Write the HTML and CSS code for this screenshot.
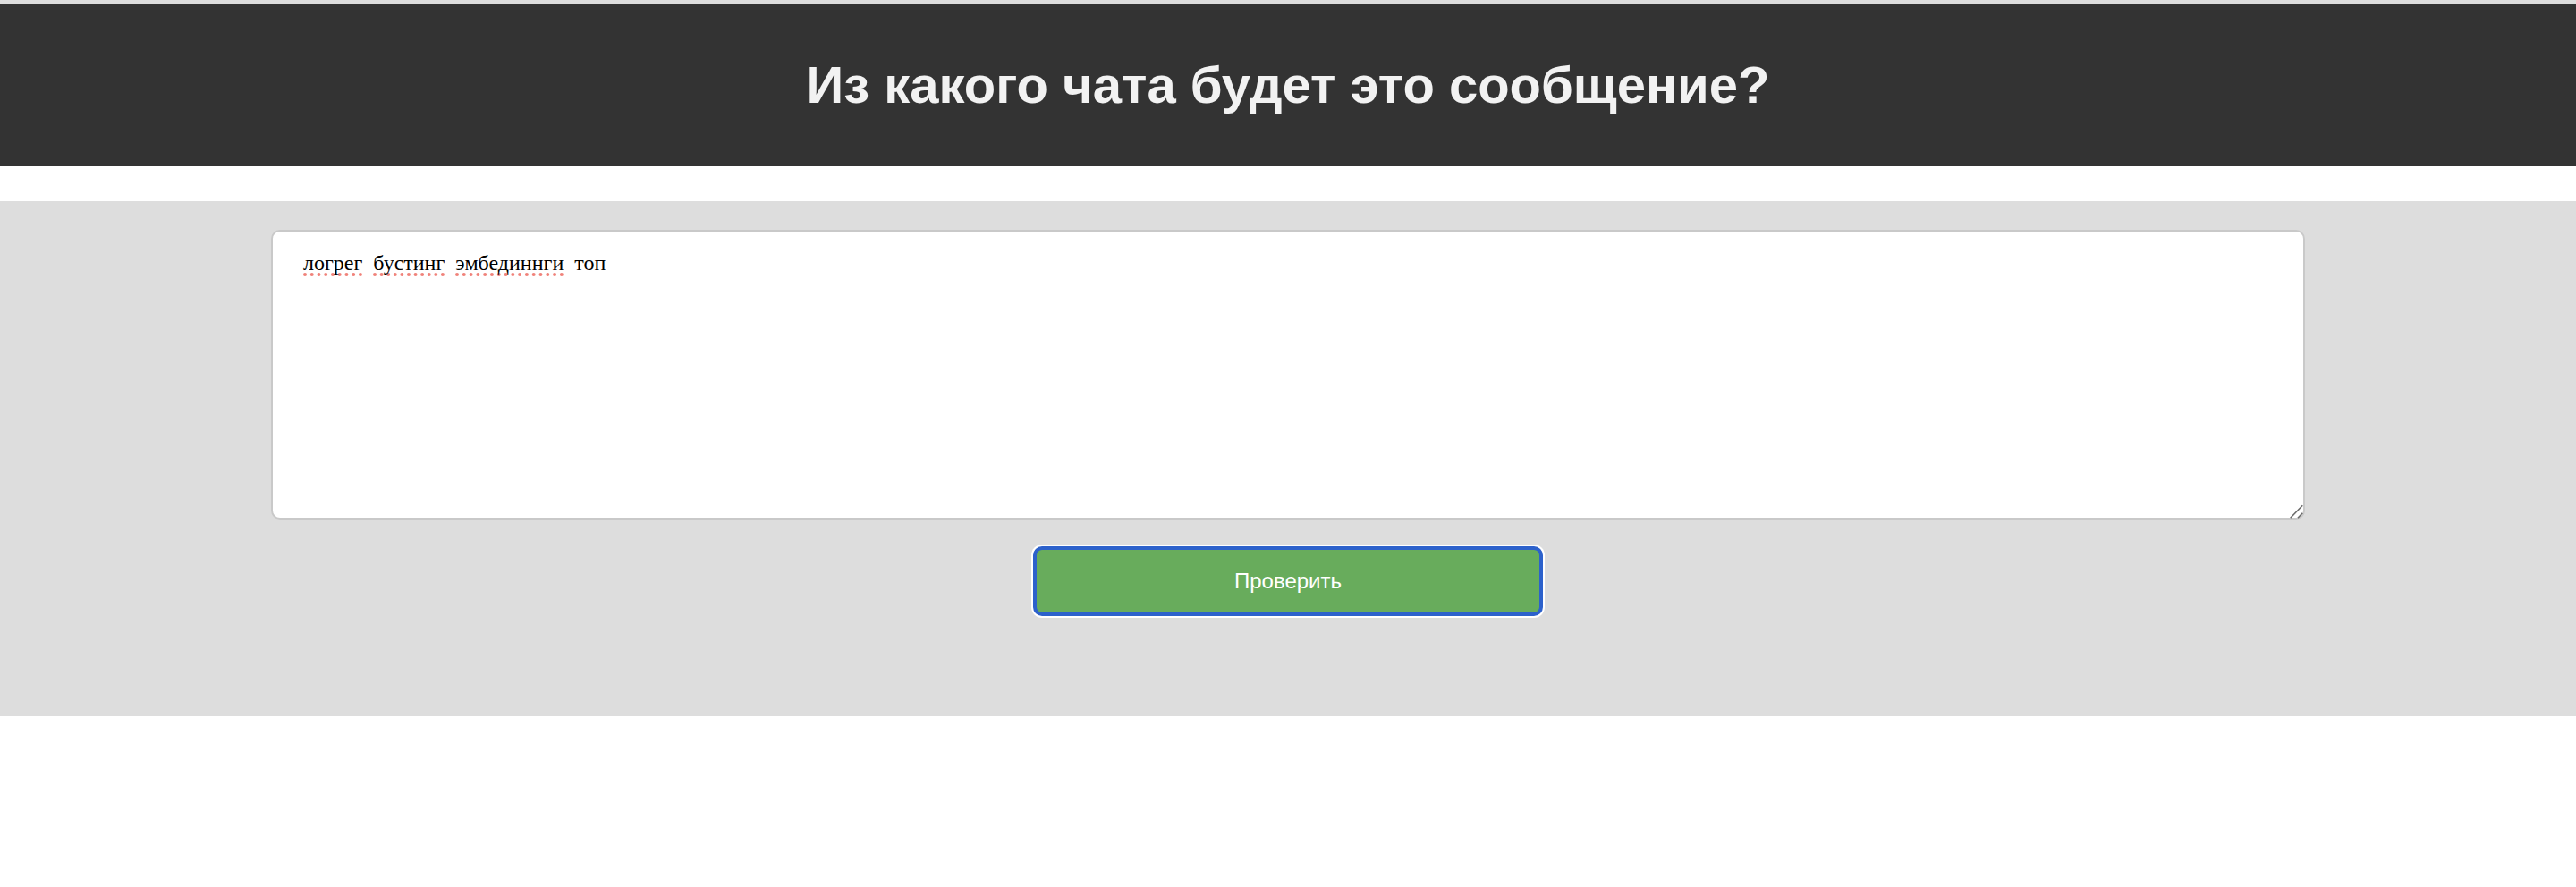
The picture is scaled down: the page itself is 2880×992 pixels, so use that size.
FILE: index.html
```html
<!DOCTYPE html>
<html lang="ru">
<head>
<meta charset="utf-8">
<title>Из какого чата будет это сообщение?</title>
<link rel="stylesheet" href="styles.css">
</head>
<body>
<header class="site-header">
  <h1 class="title">Из какого чата будет это сообщение?</h1>
</header>
<main class="panel">
  <form class="check-form">
    <div class="input-wrap">
      <div class="message-input" contenteditable="true" role="textbox" aria-multiline="true"><span class="typo">логрег</span>  <span class="typo">бустинг</span>  <span class="typo">эмбединнги</span>  топ</div>
      <svg class="resizer" width="16" height="16" viewBox="0 0 16 16" aria-hidden="true">
        <line x1="0.7" y1="15.3" x2="14.3" y2="1.3" stroke="#6a6a6a" stroke-width="1.6"/>
        <line x1="9" y1="15.3" x2="14.3" y2="9.7" stroke="#6a6a6a" stroke-width="1.6"/>
      </svg>
    </div>
    <button type="button" class="check-btn">Проверить</button>
  </form>
</main>
</body>
</html>
```
FILE: styles.css
```css
html, body {
  margin: 0;
  padding: 0;
  background: #ffffff;
  font-family: "Liberation Sans", Arial, sans-serif;
}

.site-header {
  border-top: 5px solid #dedede;
  background: #333333;
  height: 181px;
  display: flex;
  align-items: center;
  justify-content: center;
}

.title {
  margin: 0;
  color: #f2f2f2;
  font-size: 58px;
  font-weight: 700;
  line-height: 1.15;
}

.panel {
  margin-top: 39px;
  background: #dddddd;
  height: 576px;
  box-sizing: border-box;
  padding-top: 32px;
}

.check-form {
  display: flex;
  flex-direction: column;
  align-items: center;
}

.input-wrap {
  position: relative;
  width: 2274px;
  height: 324px;
}

.message-input {
  width: 100%;
  height: 100%;
  box-sizing: border-box;
  border: 2px solid #c9c9c9;
  border-radius: 10px;
  background: #ffffff;
  padding: 22px 34px;
  font-family: "Liberation Serif", "Times New Roman", serif;
  font-size: 24px;
  color: #000000;
  white-space: pre-wrap;
  overflow: auto;
  outline: none;
}

.resizer {
  position: absolute;
  right: 1px;
  bottom: 1px;
  pointer-events: none;
}

.typo {
  text-decoration: underline dotted #f0827a;
  text-decoration-thickness: 4px;
  text-underline-offset: 3px;
  text-decoration-skip-ink: none;
}

.check-btn {
  margin-top: 30px;
  width: 570px;
  height: 78px;
  border: 4px solid #2c61cb;
  border-radius: 10px;
  box-shadow: 0 0 0 2px #ffffff;
  background: #68ac5c;
  color: #ffffff;
  font-family: "Liberation Sans", Arial, sans-serif;
  font-size: 24px;
  cursor: pointer;
}
```
